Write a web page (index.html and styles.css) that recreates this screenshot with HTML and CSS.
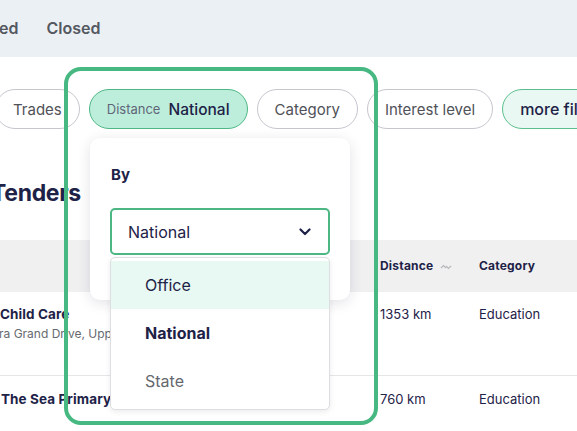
FILE: index.html
```html
<!DOCTYPE html>
<html>
<head>
<meta charset="utf-8">
<link rel="stylesheet" href="styles.css">
</head>
<body>
<div class="page">
  <div class="topbar">
    <span class="tab tab-cut">ed</span>
    <span class="tab">Closed</span>
  </div>

  <div class="filters">
    <span class="chip chip-cut">Trades</span>
    <span class="chip chip-active"><span class="chip-label">Distance</span><span class="chip-value">National</span></span>
    <span class="chip">Category</span>
    <span class="chip">Interest level</span>
    <span class="chip chip-more">more filters</span>
  </div>

  <h1 class="heading">Tenders</h1>

  <div class="table">
    <div class="thead">
      <div class="col-name"></div>
      <div class="col-dist th">Distance
        <svg class="sort" width="12" height="8" viewBox="0 0 12 8"><path d="M1 5 L3.5 2.5 L6 5 M6 3 L8.5 5.5 L11 3" fill="none" stroke="#b8b8bc" stroke-width="1.2"/></svg>
      </div>
      <div class="col-cat th">Category</div>
    </div>
    <div class="row">
      <div class="col-name">
        <div class="name">Child Care</div>
        <div class="addr">ra Grand Drive, Upper Coomera</div>
      </div>
      <div class="col-dist">1353 km</div>
      <div class="col-cat">Education</div>
    </div>
    <div class="row row-2">
      <div class="col-name">
        <div class="name name-2">The Sea Primary</div>
      </div>
      <div class="col-dist">760 km</div>
      <div class="col-cat">Education</div>
    </div>
  </div>
</div>

<div class="popover">
  <div class="pop-title">By</div>
  <div class="select">
    <span>National</span>
    <svg width="12" height="8" viewBox="0 0 12 8"><path d="M1.5 1.5 L6 6 L10.5 1.5" fill="none" stroke="#1e2247" stroke-width="2.2" stroke-linecap="round" stroke-linejoin="round"/></svg>
  </div>
</div>

<div class="options">
  <div class="option option-hover">Office</div>
  <div class="option option-selected">National</div>
  <div class="option option-muted">State</div>
</div>

<div class="highlight"></div>
</body>
</html>
```

FILE: styles.css
```css
* { box-sizing: border-box; }
html, body {
  margin: 0;
  padding: 0;
  width: 577px;
  height: 431px;
  overflow: hidden;
  background: #fff;
  font-family: Inter, "Noto Sans", sans-serif;
  color: #1e2247;
}
.page { width: 577px; }

.topbar {
  height: 57px;
  background: #ebf0f5;
  display: flex;
  align-items: center;
  gap: 28px;
  padding-bottom: 1px;
}
.tab {
  font-size: 16px;
  font-weight: 600;
  color: #545860;
}
.tab-cut { margin-left: -1px; }

.filters {
  margin-top: 32px;
  display: flex;
  gap: 9px;
  white-space: nowrap;
  margin-left: -5px;
}
.chip {
  height: 40px;
  display: inline-flex;
  align-items: center;
  padding: 0 17px;
  border: 1px solid #c6c6cf;
  border-radius: 20px;
  font-size: 15px;
  color: #505258;
  background: #fff;
  flex: none;
}
.chip-active {
  background: #bdeedc;
  border-color: #4db884;
  gap: 8px;
}
.chip-label { font-size: 13px; color: #606678; }
.chip-value { font-size: 15.5px; font-weight: 500; color: #1e2247; }
.chip-more {
  background: #e9f8f2;
  border-color: #5bbf8d;
  color: #1e2247;
  font-weight: 500;
  font-size: 16px;
}

.heading {
  margin: 48px 0 0 -9px;
  font-size: 23px;
  line-height: 32px;
  font-weight: 700;
  color: #1e2247;
  letter-spacing: -0.3px;
}

.table { margin-top: 31px; }
.thead, .row {
  display: grid;
  grid-template-columns: 380px 99px 98px;
}
.thead {
  height: 52px;
  background: #f0f0f1;
  align-items: center;
}
.th {
  font-size: 12px;
  font-weight: 700;
  color: #1e2247;
  letter-spacing: 0.2px;
}
.sort { margin-left: 4px; vertical-align: middle; }
.row {
  height: 84px;
  border-bottom: 1px solid #e6e6e8;
  padding-top: 13px;
  font-size: 13px;
  color: #1e2247;
  align-items: start;
}
.row-2 { border-bottom: none; padding-top: 14px; }
.col-dist, .col-cat { line-height: 18px; }
.name {
  font-size: 13.5px;
  font-weight: 700;
  line-height: 18px;
  white-space: nowrap;
  letter-spacing: 0.1px;
}
.name-2 { margin-left: 1px; }
.addr {
  margin-top: 3px;
  font-size: 12px;
  color: #666a70;
  white-space: nowrap;
  margin-left: -1px;
}

.popover {
  position: absolute;
  left: 90px;
  top: 138px;
  width: 260px;
  height: 162px;
  background: #fff;
  border-radius: 10px;
  box-shadow: 0 3px 14px rgba(30, 34, 71, 0.13);
  padding: 28px 20px 0 20px;
}
.pop-title {
  font-size: 15px;
  font-weight: 700;
  line-height: 18px;
  margin-left: 1px;
}
.select {
  margin-top: 24px;
  height: 47px;
  border: 2px solid #4cb782;
  border-radius: 5px;
  display: flex;
  align-items: center;
  justify-content: space-between;
  padding: 0 17px 0 16px;
  font-size: 16px;
  color: #1e2247;
}

.options {
  position: absolute;
  left: 110px;
  top: 257px;
  width: 220px;
  height: 153px;
  background: #fff;
  border: 1px solid #dedee2;
  border-radius: 5px;
  box-shadow: 0 2px 6px rgba(0, 0, 0, 0.08);
  padding-top: 3px;
}
.option {
  height: 48px;
  display: flex;
  align-items: center;
  padding-left: 34px;
  font-size: 16px;
  color: #1e2247;
}
.option-hover { background: #e8f8f3; }
.option-selected { font-weight: 700; }
.option-muted { color: #65686e; }

.highlight {
  position: absolute;
  left: 64px;
  top: 67px;
  width: 314px;
  height: 358px;
  border: 4px solid #47b881;
  border-radius: 17px;
  pointer-events: none;
}
```
